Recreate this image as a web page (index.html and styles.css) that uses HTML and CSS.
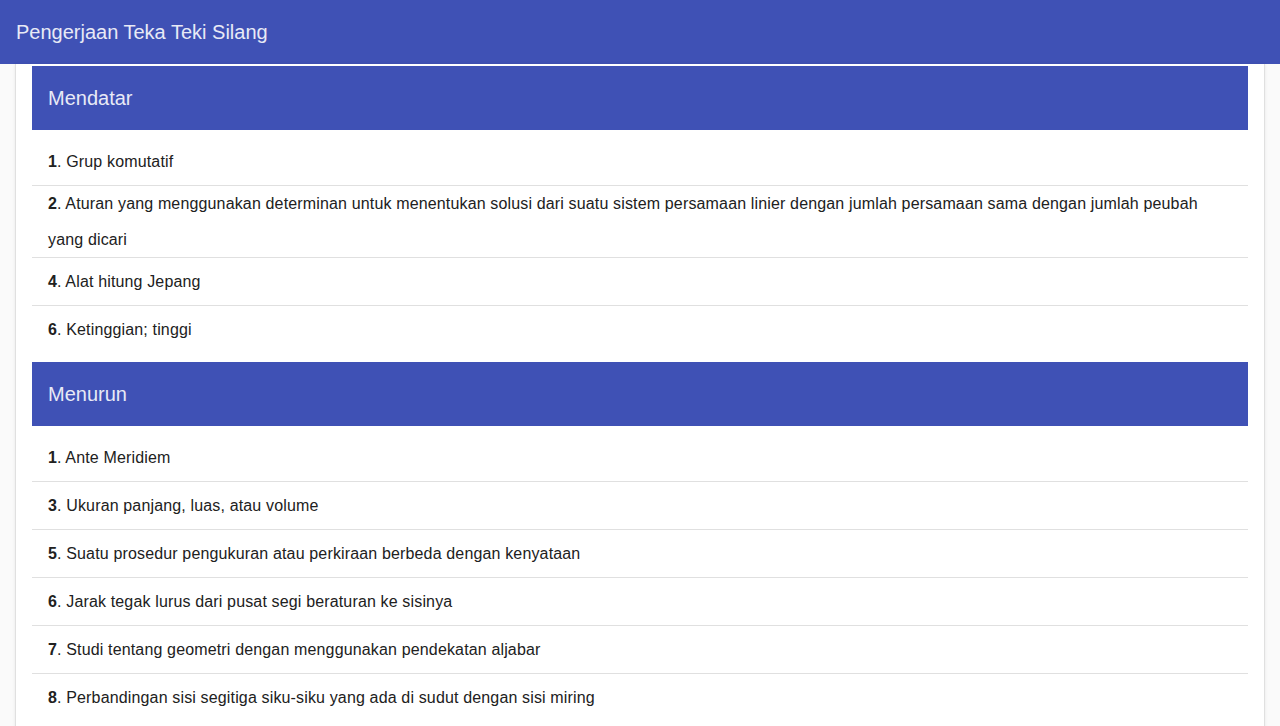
FILE: index.html
```html
<!DOCTYPE html>
<html lang="id">
<head>
<meta charset="utf-8">
<title>Pengerjaan Teka Teki Silang</title>
<link rel="stylesheet" href="styles.css">
</head>
<body>
<header class="topbar">Pengerjaan Teka Teki Silang</header>
<main class="card">
  <section class="group">
    <h2 class="group-title">Mendatar</h2>
    <ul class="clues">
      <li><span><b>1</b>. Grup komutatif</span></li>
      <li><span><b>2</b>. Aturan yang menggunakan determinan untuk menentukan solusi dari suatu sistem persamaan linier dengan jumlah persamaan sama dengan jumlah peubah yang dicari</span></li>
      <li><span><b>4</b>. Alat hitung Jepang</span></li>
      <li><span><b>6</b>. Ketinggian; tinggi</span></li>
    </ul>
  </section>
  <section class="group">
    <h2 class="group-title">Menurun</h2>
    <ul class="clues">
      <li><span><b>1</b>. Ante Meridiem</span></li>
      <li><span><b>3</b>. Ukuran panjang, luas, atau volume</span></li>
      <li><span><b>5</b>. Suatu prosedur pengukuran atau perkiraan berbeda dengan kenyataan</span></li>
      <li><span><b>6</b>. Jarak tegak lurus dari pusat segi beraturan ke sisinya</span></li>
      <li><span><b>7</b>. Studi tentang geometri dengan menggunakan pendekatan aljabar</span></li>
      <li><span><b>8</b>. Perbandingan sisi segitiga siku-siku yang ada di sudut dengan sisi miring</span></li>
    </ul>
  </section>
</main>
</body>
</html>
```
FILE: styles.css
```css
html, body {
  margin: 0;
  padding: 0;
  background: #fafafa;
  font-family: "Liberation Sans", Arial, sans-serif;
  color: #212121;
}
.topbar {
  height: 64px;
  background: #3f51b5;
  color: #e8eaf6;
  font-size: 20px;
  line-height: 64px;
  padding-left: 16px;
}
.card {
  margin: 0 15px;
  background: #fff;
  border-left: 1px solid #e0e0e0;
  border-right: 1px solid #e0e0e0;
  box-shadow: 0 0 3px rgba(0,0,0,0.08);
  padding: 2px 16px 0;
}
.group-title {
  margin: 0;
  height: 64px;
  line-height: 64px;
  background: #3f51b5;
  color: #e8eaf6;
  font-size: 20px;
  font-weight: normal;
  padding-left: 16px;
}
.clues {
  list-style: none;
  margin: 0;
  padding: 8px 0;
}
.clues li {
  display: flex;
  align-items: center;
  min-height: 48px;
  padding: 0 16px;
  font-size: 16px;
  line-height: 36px;
  letter-spacing: 0.15px;
  background: linear-gradient(#e0e0e0, #e0e0e0) left bottom / 100% 1px no-repeat;
}
.clues li:last-child {
  background: none;
}
.clues b {
  font-weight: bold;
}
```
